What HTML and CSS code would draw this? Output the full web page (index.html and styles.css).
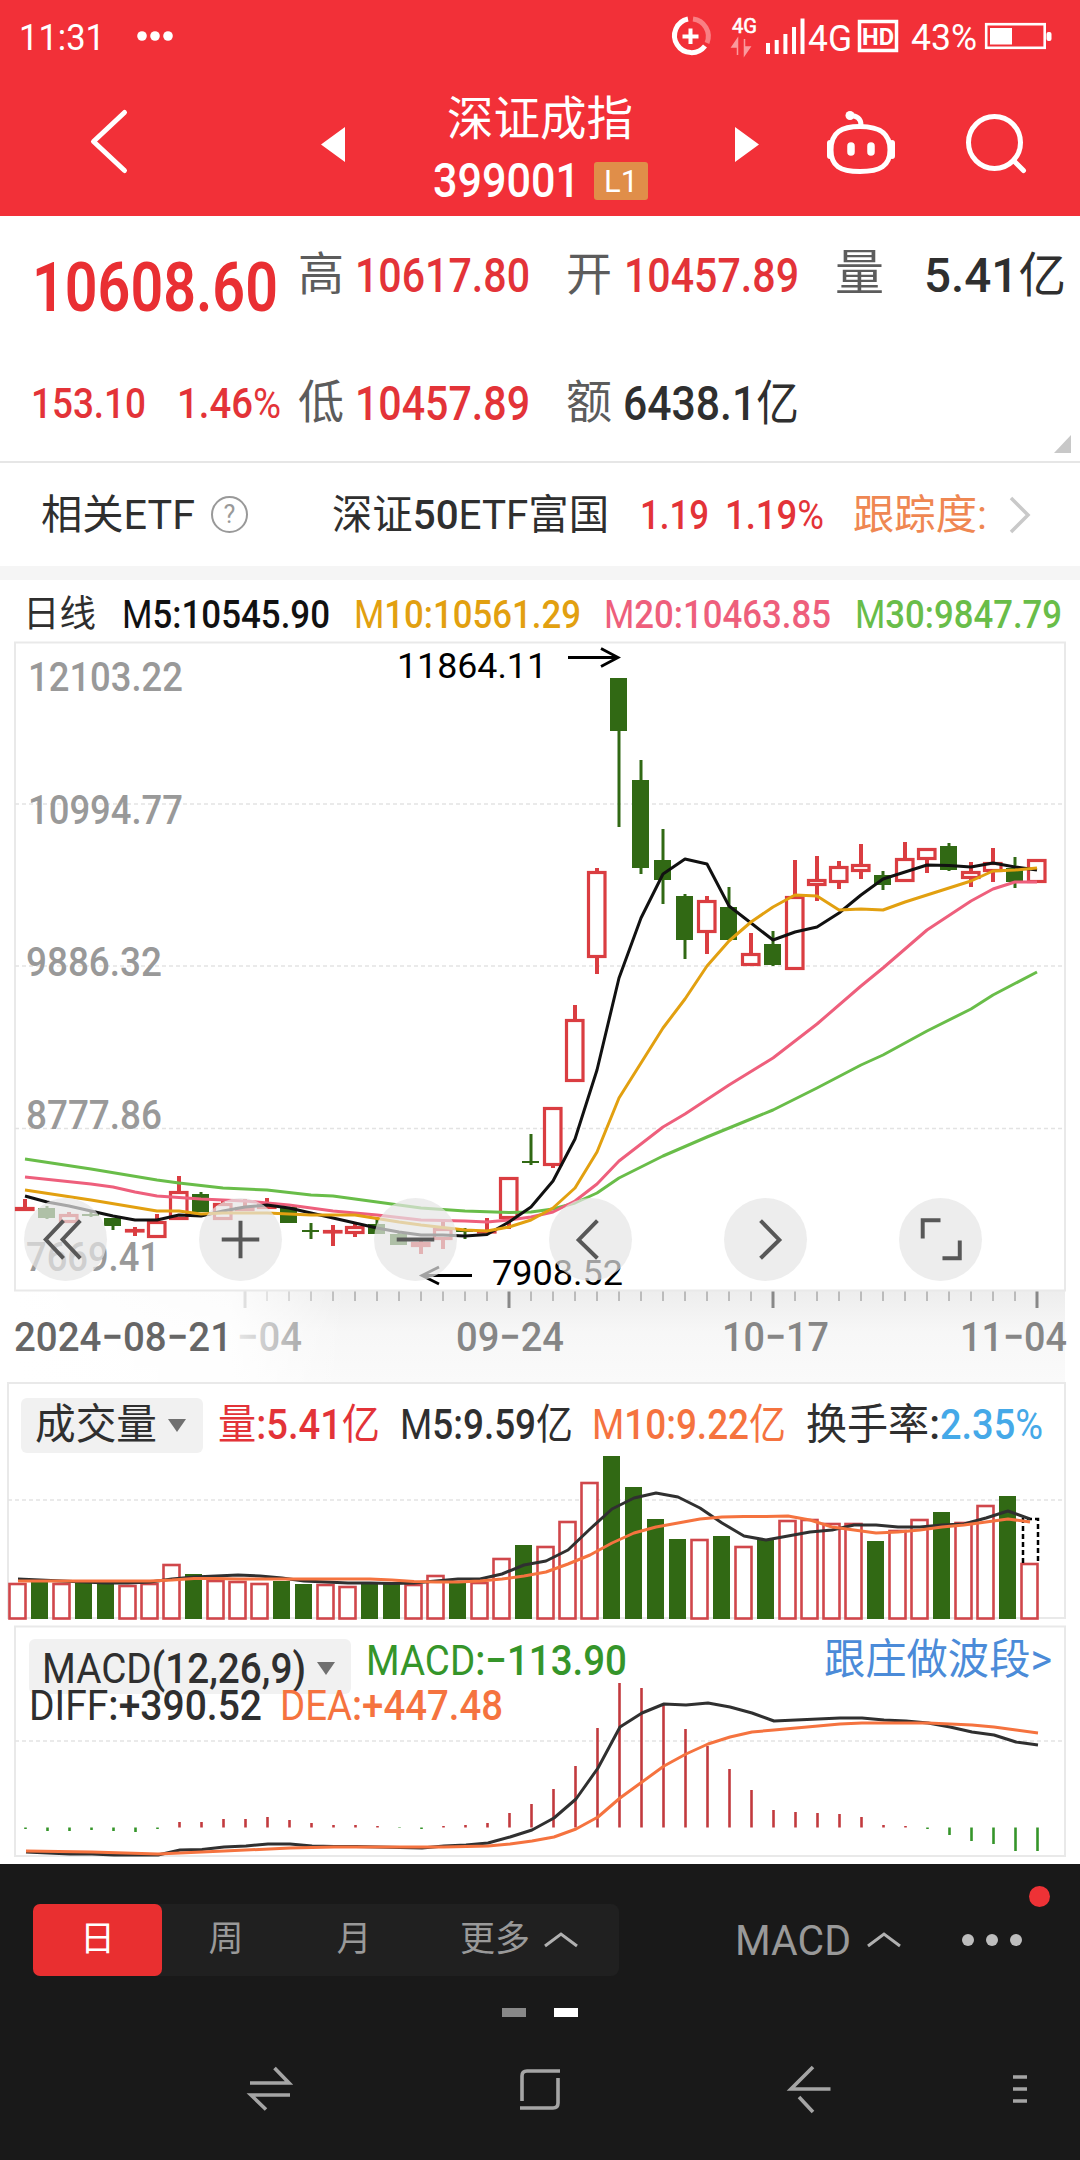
FILE: index.html
```html
<!DOCTYPE html>
<html lang="zh-CN">
<head>
  <meta charset="UTF-8">
  <meta name="viewport" content="width=device-width, initial-scale=1.0">
  <title>深证成指 399001</title>
  <link rel="stylesheet" href="styles.css">
</head>
<body>
  <header class="header">
    <div class="status">
      <span class="clock" data-w="86">11:31</span>
      <svg class="status-dots" width="40" height="14" viewBox="0 0 40 14"><circle cx="7" cy="7" r="4.8"/><circle cx="20" cy="7" r="4.8"/><circle cx="33" cy="7" r="4.8"/></svg>
      <svg class="status-icons" width="240" height="72" viewBox="670 0 240 72">
        <path d="M689 19 A17 17 0 1 0 706 46" fill="none" stroke="#fff" stroke-width="5"/>
        <path d="M694 19 A17.5 17.5 0 0 1 708 43" fill="none" stroke="#f97f83" stroke-width="5"/>
        <path d="M691.5 28.500v15.500M683.500 36.500h16" stroke="#fff" stroke-width="4"/>
        <text x="733" y="32.500" font-size="20" textLength="25" lengthAdjust="spacingAndGlyphs" stroke="#fff" stroke-width=".6">4G</text>
        <path d="M738.500 55V39L733 47h5M745.500 39v16l5.500-8h-5" fill="#fa9a9d" stroke="#fa9a9d" stroke-width="1.500"/>
        <path d="M769 43v11M777.700 40v14M786.400 34v20M795 27v27M803.500 18.500v35.500" stroke="#fff" stroke-width="4"/>
        <text x="809" y="51" font-size="37" textLength="44" lengthAdjust="spacingAndGlyphs">4G</text>
        <rect x="860.500" y="21.500" width="37" height="29" fill="none" stroke="#fff" stroke-width="3.500"/>
        <text x="863" y="44.500" font-size="24" font-weight="700" textLength="32" lengthAdjust="spacingAndGlyphs">HD</text>
      </svg>
      <span class="battery-text" data-w="66">43%</span>
      <svg class="battery" width="70" height="30" viewBox="0 0 70 30"><rect x="2.200" y="3.200" width="58.500" height="23.600" fill="none" stroke="#fff" stroke-width="2.600"/><rect x="6" y="7" width="22" height="16.500"/><rect x="62.500" y="11" width="5" height="9" rx="2"/></svg>
    </div>
    <div class="navbar">
      <svg width="1080" height="144" viewBox="0 72 1080 144" class="nav-icons">
        <path d="M124.500 112.500L93.500 141.500L124.500 170.500" class="line" stroke-width="5"/>
        <path d="M345 127v35l-24-17.500zM735 127v35l24-17.500z" fill="#fff"/>
        <g class="line" stroke-width="5">
          <path d="M860 126.500C878 126.500 890 132 890 150C890 166 880 171.500 860 171.500S831 166 831 150C831 132 842 126.500 860 126.500Z"/>
          <path d="M861 125C861 119 857 115.500 850 115.500"/>
          <path d="M830 143v13M892 143v13" stroke-width="6"/>
          <path d="M851 146v6M871 146v6" stroke-width="7.500"/>
          <circle cx="994.500" cy="142.500" r="26"/>
          <path d="M1014 161L1023.500 170.500"/>
        </g>
        <circle cx="850" cy="115.500" r="4.500" fill="#fff"/>
      </svg>
      <div class="title">
        <div class="title-name">深证成指</div>
        <div class="title-code"><span class="num code" data-w="147">399001</span><span class="level">L1</span></div>
      </div>
    </div>
  </header>

  <section class="quote">
    <div class="quote-row first">
      <span class="num price" data-w="246">10608.60</span>
      <span class="label">高</span><span class="num red" data-w="175">10617.80</span>
      <span class="label">开</span><span class="num red" data-w="175">10457.89</span>
      <span class="label">量</span><span class="num" data-w="142">5.41<em>亿</em></span>
    </div>
    <div class="quote-row second">
      <span class="num change" data-w="115">153.10</span><span class="num change" data-w="104">1.46<em>%</em></span>
      <span class="label">低</span><span class="num red" data-w="175">10457.89</span>
      <span class="label">额</span><span class="num" data-w="176">6438.1<em>亿</em></span>
    </div>
    <i class="corner"></i>
  </section>

  <section class="etf">
    <span class="etf-title" data-w="154">相关ETF</span>
    <span class="help">?</span>
    <span class="etf-name" data-w="277">深证<b>50</b>ETF富国</span>
    <span class="num red etf-a" data-w="69">1.19</span>
    <span class="num red etf-b" data-w="99">1.19<em>%</em></span>
    <span class="track" data-w="134">跟踪度:</span>
    <svg width="24" height="40" viewBox="0 0 24 40"><path d="M3 3L20 20L3 37" fill="none" stroke="#c9c9c9" stroke-width="3.500"/></svg>
  </section>

  <section class="legend">
    <span class="day" data-w="73">日线</span>
    <span class="num m5" data-w="208"><em>M</em>5:10545.90</span>
    <span class="num m10" data-w="227"><em>M</em>10:10561.29</span>
    <span class="num m20" data-w="227"><em>M</em>20:10463.85</span>
    <span class="num m30" data-w="207"><em>M</em>30:9847.79</span>
  </section>

  <section class="stack kline">
    <svg id="kline" width="1080" height="741" viewBox="0 641 1080 741">
      <defs>
        <linearGradient id="shade" x1="0" y1="0" x2="0" y2="1"><stop offset="0" stop-color="#ededed"/><stop offset=".45" stop-color="#f7f7f7"/><stop offset="1" stop-color="#fafafa"/></linearGradient>
        <linearGradient id="fade" x1="0" y1="0" x2="1" y2="0"><stop offset="0" stop-color="#fff"/><stop offset=".65" stop-color="#fff" stop-opacity=".85"/><stop offset="1" stop-color="#fff" stop-opacity="0"/></linearGradient>
      </defs>
      <rect x="15" y="1291" width="1050" height="91" fill="url(#shade)"/>
      <g id="ticks"></g>
      <g class="axis-text date">
        <text x="237" y="1351" textLength="65">−04</text>
        <text x="456" y="1351" textLength="108">09−24</text>
        <text x="722" y="1351" textLength="107">10−17</text>
        <text x="960" y="1351" textLength="107">11−04</text>
        <rect x="15" y="1291" width="330" height="91" fill="url(#fade)"/>
        <text x="14" y="1351" textLength="218" fill="#666">2024−08−21</text>
      </g>
      <rect x="15" y="642.500" width="1050" height="648" class="frame"/>
      <path d="M15 804H1065M15 966H1065M15 1128.500H1065" class="grid"/>
      <g class="axis-text price-axis">
        <text x="28" y="691" textLength="155">12103.22</text>
        <text x="28" y="824" textLength="155">10994.77</text>
        <text x="26" y="976" textLength="136">9886.32</text>
        <text x="26" y="1129" textLength="136">8777.86</text>
        <text x="26" y="1271" textLength="134">7669.41</text>
      </g>
      <g id="candles"></g>
      <g id="averages"></g>
      <g class="mark">
        <text x="397" y="678" textLength="150">11864.11</text>
        <path d="M568 657.500H617M601 648.500L618 657.500L601 666.500"/>
        <text x="492" y="1284.500" textLength="131">7908.52</text>
        <path d="M472 1275.500H423M439 1267L422 1275.500L439 1284"/>
      </g>
    </svg>
    <div class="tools">
      <button><svg viewBox="0 0 84 84"><path d="M40 23L22 42L40 61M57 23L39 42L57 61"/></svg></button>
      <button><svg viewBox="0 0 84 84"><path d="M42 23V61M23 42H61"/></svg></button>
      <button><svg viewBox="0 0 84 84"><path d="M23 42H61"/></svg></button>
      <button><svg viewBox="0 0 84 84"><path d="M49 23L30 42.500L49 61"/></svg></button>
      <button><svg viewBox="0 0 84 84"><path d="M37 23L56 42.500L37 61"/></svg></button>
      <button><svg viewBox="0 0 84 84"><path d="M42 22.500H24V41M44 61H61.500V43"/></svg></button>
    </div>
  </section>

  <section class="stack volume">
    <svg id="volume" width="1080" height="240" viewBox="0 1381 1080 240">
      <rect x="8" y="1382" width="1057" height="235" class="frame"/>
      <path d="M8 1499H1065" class="grid"/>
    </svg>
    <div class="panel-head">
      <span class="picker"><span data-w="122">成交量</span><i></i></span>
      <span class="num red v1" data-w="162"><em>量</em>:5.41<em>亿</em></span>
      <span class="num v2" data-w="173"><em>M</em>5:9.59<em>亿</em></span>
      <span class="num orange v3" data-w="194"><em>M</em>10:9.22<em>亿</em></span>
      <span class="v4" data-w="134">换手率<b>:</b></span><span class="num blue" data-w="103">2.35<em>%</em></span>
    </div>
  </section>

  <section class="stack macd">
    <svg id="macd" width="1080" height="242" viewBox="0 1621 1080 242">
      <rect x="15" y="1625.500" width="1050" height="229.500" class="frame"/>
      <path d="M15 1740H1065" class="grid"/>
    </svg>
    <div class="macd-head">
      <div class="macd-row">
        <span class="picker"><span class="num" data-w="264"><em>MACD</em>(12,26,9)</span><i></i></span>
        <span class="num green" data-w="261"><em>MACD</em>:−113.90</span>
        <a class="link" data-w="228">跟庄做波段&gt;</a>
      </div>
      <div class="macd-row values">
        <span class="num" data-w="233"><em>DIFF</em>:+390.52</span>
        <span class="num orange" data-w="223"><em>DEA</em>:+447.48</span>
      </div>
    </div>
  </section>

  <footer class="footer">
    <div class="toolbar">
      <div class="tabs">
        <span class="tab active">日</span><span class="tab">周</span><span class="tab">月</span>
        <span class="tab more">更多<svg width="36" height="18" viewBox="0 0 36 18"><path d="M2 15L18 3L34 15"/></svg></span>
      </div>
      <div class="indicator"><span data-w="116">MACD</span><svg width="36" height="18" viewBox="0 0 36 18"><path d="M2 15L18 3L34 15"/></svg></div>
      <div class="dots"><i></i><i></i><i></i><b class="badge"></b></div>
    </div>
    <div class="pager"><i></i><i class="on"></i></div>
    <svg class="sysnav" width="1080" height="100" viewBox="0 2038 1080 100">
      <path d="M250 2082H289L274.500 2067M290 2094H251L266 2108.500"/>
      <path d="M522 2100V2075Q522 2070 527 2070H560M520 2107H553Q558 2107 558 2102V2077"/>
      <path d="M813 2066L791 2088H830.500M799 2096L813 2111"/>
      <path d="M1013 2076h14M1013 2088h14M1013 2100h14"/>
    </svg>
  </footer>

  <script src="script.js"></script>
</body>
</html>
```

FILE: styles.css
```css
* {
  box-sizing: border-box;
}
body {
  margin: 0;
  width: 1080px;
  height: 2160px;
  overflow: hidden;
  background: #fff;
  color: #2f2f2f;
  font-family: Roboto, "Noto Sans CJK SC", sans-serif;
}
svg {
  display: block;
  flex: none;
}
span {
  white-space: nowrap;
}
i {
  display: block;
}
em {
  font-style: normal;
  font-weight: 400;
}
b {
  font-weight: 500;
}
[data-w] {
  display: inline-block;
  flex: none;
  transform-origin: 0 50%;
}
.num {
  font-weight: 500;
}
.red {
  color: #e33338;
}
.orange {
  color: #f5733f;
}
.blue {
  color: #45a9e8;
}
.green {
  color: #35952a;
}

/* header */
.header {
  height: 216px;
  background: #f23038;
  color: #fff;
}
.status {
  display: flex;
  align-items: center;
  height: 72px;
  padding: 3px 0 0 19px;
}
.status svg {
  fill: #fff;
}
.clock,
.battery-text {
  font-size: 37px;
}
.status-dots {
  margin-left: 30px;
  margin-top: -3px;
}
.status-icons {
  margin: -3px 2px 0 494px;
}
.battery {
  margin-left: 7px;
  margin-top: -3px;
}
.navbar {
  display: grid;
  height: 144px;
}
.nav-icons,
.title {
  grid-area: 1 / 1;
}
.line {
  fill: none;
  stroke: #fff;
  stroke-linecap: round;
  stroke-linejoin: round;
}
.title {
  padding-left: 433px;
}
.title-name {
  padding: 19px 0 0 14px;
  font-size: 46.500px;
  line-height: 56px;
}
.title-code {
  display: flex;
  align-items: center;
  height: 72px;
  margin-top: -2px;
}
.code {
  font-size: 49px;
  line-height: 60px;
}
.level {
  width: 54px;
  height: 38px;
  margin-left: 14px;
  background: #e08e49;
  border-radius: 3px;
  font-size: 31px;
  line-height: 39px;
  text-align: center;
}

/* quote */
.quote {
  position: relative;
  height: 247px;
  padding-top: 30px;
  border-bottom: 2px solid #e6e6e6;
}
.quote-row {
  display: flex;
  align-items: center;
  height: 60px;
  font-size: 48px;
  line-height: 60px;
}
.second {
  margin-top: 68px;
}
.price {
  margin-left: 32px;
  font-size: 69px;
  padding-top: 24px;
  font-weight: 600;
  color: #e92f33;
}
.quote .label {
  flex: none;
  width: 46px;
  margin: -4px 11px 0 20px;
  font-size: 46px;
  color: #5c5c5c;
}
.quote .red + .label {
  margin-left: 36px;
}
.first .red + .label:nth-of-type(4) {
  margin-right: 12px;
}
.first .red + .label:nth-of-type(6) {
  width: 50px;
  margin-right: 39px;
  font-size: 49px;
}
.change {
  margin-left: 31px;
  color: #e33338;
  font-size: 42px;
}
.second .label:nth-of-type(3) {
  margin-left: 17px;
}
.corner {
  position: absolute;
  right: 9px;
  bottom: 8px;
  border: solid transparent;
  border-width: 0 0 18px 17px;
  border-bottom-color: #c8c8c8;
}

/* etf */
.etf {
  display: flex;
  align-items: center;
  height: 103px;
  padding-left: 41px;
  font-size: 41px;
  line-height: 60px;
}
.help {
  width: 37px;
  height: 37px;
  margin: 0 84px 0 16px;
  border: 2px solid #999;
  border-radius: 50%;
  color: #999;
  font-size: 25px;
  line-height: 34px;
  text-align: center;
}
.etf-a {
  margin-left: 31px;
}
.etf-b {
  margin-left: 16px;
}
.track {
  margin-left: 29px;
  color: #ef8752;
}
.etf svg {
  margin-left: 21px;
}

/* legend */
.legend {
  display: flex;
  align-items: center;
  height: 75px;
  padding: 8px 0 0 23px;
  border-top: 14px solid #f5f5f5;
  font-size: 39px;
  line-height: 50px;
}
.day {
  font-size: 37px;
}
.m5 {
  margin-left: 26px;
  color: #111;
}
.m10 {
  margin-left: 24px;
  color: #e2a010;
}
.m20 {
  margin-left: 23px;
  color: #ee5f7c;
}
.m30 {
  margin-left: 24px;
  color: #69bd49;
}

/* charts */
.stack {
  display: grid;
}
.stack > * {
  grid-area: 1 / 1;
}
.frame {
  fill: none;
  stroke: #e9e9e9;
  stroke-width: 2;
}
.grid {
  stroke: #e3e3e3;
  stroke-width: 1.500;
  stroke-dasharray: 4 3;
}
.axis-text {
  font-size: 41px;
  font-weight: 500;
  fill: #999;
}
.date {
  fill: #868686;
}
.mark text {
  font-size: 35.500px;
  fill: #000;
}
.mark path {
  fill: none;
  stroke: #000;
  stroke-width: 2.800;
}
.ma {
  fill: none;
  stroke-width: 3;
  stroke-linejoin: round;
}
.tools {
  display: flex;
  gap: 92px;
  padding: 557px 0 0 24px;
  height: 641px;
}
.tools button {
  width: 83px;
  height: 83px;
  padding: 0;
  border: none;
  border-radius: 50%;
  background: rgba(229, 229, 229, .7);
}
.tools path {
  fill: none;
  stroke: #585858;
  stroke-width: 4;
}
.panel-head {
  display: flex;
  align-items: center;
  height: 86px;
  padding-left: 21px;
  font-size: 42px;
  line-height: 54px;
}
.picker {
  display: flex;
  align-items: center;
  width: 182px;
  height: 55px;
  padding-left: 14px;
  background: #f1f1f1;
  border-radius: 6px;
}
.picker i {
  margin-left: 11px;
  border: solid transparent;
  border-width: 13px 9.500px 0;
  border-top-color: #707070;
}
.v1 {
  margin-left: 15px;
}
.v2 {
  margin-left: 20px;
}
.v3 {
  margin-left: 19px;
}
.v4 {
  margin-left: 20px;
}
.macd-head {
  padding: 17px 0 0 29px;
  font-size: 42px;
}
.macd-row {
  display: flex;
  line-height: 46px;
}
.macd .picker {
  width: 322px;
  padding: 4px 0 0 13px;
}
.macd .green {
  margin-left: 15px;
  margin-top: -1px;
}
.link {
  margin: -2px 0 0 197px;
  color: #4b8bd8;
}
.macd .values {
  margin-top: -11px;
  gap: 18px;
}

/* footer */
.footer {
  height: 297px;
  background: #191919;
  border-bottom: 1px solid #000;
}
.toolbar {
  display: flex;
  padding: 40px 0 0 33px;
  height: 112px;
  color: #999;
}
.toolbar path {
  fill: none;
  stroke: #b0b0b0;
  stroke-width: 3;
}
.tabs {
  display: flex;
  width: 586px;
  height: 72px;
  background: #202020;
  border-radius: 8px;
  font-size: 35px;
  line-height: 72px;
}
.tab {
  width: 128px;
  text-align: center;
}
.active {
  width: 129px;
  background: #e92f30;
  border-radius: 7px;
  color: #fff;
}
.more {
  display: flex;
  align-items: center;
  width: 200px;
  padding-left: 42px;
  gap: 13px;
}
.indicator {
  display: flex;
  align-items: center;
  height: 72px;
  margin-left: 116px;
  gap: 15px;
  font-size: 42px;
}
.dots {
  position: relative;
  display: flex;
  align-items: center;
  height: 72px;
  margin-left: 60px;
  gap: 12px;
}
.dots i {
  width: 12px;
  height: 12px;
  border-radius: 50%;
  background: #bdbdbd;
}
.badge {
  position: absolute;
  left: 67px;
  top: -18px;
  width: 21px;
  height: 21px;
  border-radius: 50%;
  background: #ee3236;
}
.pager {
  display: flex;
  justify-content: center;
  gap: 28px;
  height: 63px;
  padding-top: 32px;
}
.pager i {
  width: 24px;
  height: 9px;
  background: #888;
}
.pager .on {
  background: #fff;
}
.sysnav path {
  fill: none;
  stroke: #a5a5a5;
  stroke-width: 3.600;
}
```

FILE: script.js
```javascript
const RED = '#da3d41';
const GREEN = '#316914';
const STEP = 22;

// [up/down, body top, body bottom, high, low]
const candles = [
  ['r',1207,1211,1199,1211],['g',1208,1218,1206,1219],['r',1214,1223,1212,1223],['g',1214,1216,1211,1217],
  ['g',1218,1226,1218,1230],['r',1229,1232,1227,1236],['r',1221,1238,1214,1238],['r',1191,1220,1176,1220],
  ['g',1194,1212,1192,1212],['r',1203,1220,1201,1220],['r',1207,1211,1199,1211],['r',1203,1209,1198,1209],
  ['g',1207,1223,1207,1223],['g',1230,1232,1223,1239],['r',1230,1233,1225,1246],['r',1226,1234,1224,1237],
  ['g',1224,1234,1217,1234],['g',1234,1245,1231,1245],['r',1242,1247,1240,1254],['r',1228,1240,1220,1249],
  ['g',1230,1232,1228,1239],['r',1230,1233,1218,1233],['r',1177,1219,1177,1229],['g',1161,1163,1134,1165],
  ['r',1107,1166,1107,1168],['r',1019,1082,1005,1082],['r',871,958,868,974],['g',678,731,678,827],
  ['g',780,868,760,874],['g',860,880,829,904],['g',896,940,894,959],['r',900,933,896,954],
  ['g',907,940,887,940],['r',953,966,933,966],['g',944,965,931,966],['r',896,970,860,970],
  ['r',879,886,856,901],['r',866,883,861,889],['r',864,872,844,879],['g',875,885,871,890],
  ['r',858,882,842,882],['r',848,860,848,873],['g',846,870,843,871],['r',871,879,862,887],
  ['r',862,872,848,882],['g',868,882,857,888],['r',859,883,859,883]
];

// [bar index, y]
const averages = {
  '#69bd49': [[0,1159],[3,1169],[6,1180],[7,1183],[9,1188],[11,1190],[13,1195],[14,1196],[16,1202],[18,1208],[20,1211],[22,1212.5],[23,1212],[24,1209],[25,1203],[26,1193],[27,1178],[29,1156],[31,1137],[33,1119],[34,1110],[36,1088],[38,1065],[39,1055],[41,1031],[43,1009],[44,995],[46,972]],
  '#ee5f7c': [[0,1177],[3,1184],[4,1187],[5,1192],[6,1196],[8,1199],[10,1201],[12,1205],[14,1211],[16,1215],[18,1220],[20,1221],[21,1222],[22,1220],[23,1217],[24,1212],[25,1201],[26,1184],[27,1161],[29,1127],[30,1114],[32,1085],[34,1058],[36,1024],[38,986],[39,968],[41,930],[43,901],[44,889],[45,882],[46,882]],
  '#111': [[0,1196],[1,1202],[2,1206],[3,1211],[4,1216],[5,1220],[6,1220],[7,1215],[8,1216],[9,1211],[10,1207],[11,1205],[12,1208],[13,1213],[14,1218],[15,1223],[16,1228],[17,1232],[18,1235],[19,1235],[20,1236],[21,1234.5],[22,1222],[23,1207],[24,1181],[25,1139],[26,1070],[27,978],[28,918],[29,874],[30,859],[31,864],[32,906],[33,923],[34,940],[35,932],[36,927],[37,913],[38,895],[39,879],[40,872],[41,865],[42,865.5],[43,867],[44,863],[45,867],[46,870]],
  '#e2a010': [[0,1190],[3,1200],[6,1211],[7,1211],[8,1214],[9,1213],[11,1213],[13,1215],[15,1215],[17,1222],[18,1225],[20,1230],[21,1231],[22,1227],[23,1220],[24,1208],[25,1188],[26,1152],[27,1098],[28,1063],[29,1028],[30,999],[31,966],[32,941],[33,922],[34,907],[35,895],[36,896],[37,910],[38,909],[39,910],[40,902],[41,895],[42,888],[43,881],[44,871],[45,870],[46,868]]
};

const volTops = [1582,1581,1582,1582,1583,1584,1582,1563,1573,1579,1580,1582,1580,1583,1583,1585,1583,1583,1583,1574,1582,1581,1557,1544,1545,1520,1481,1455,1486,1518,1538,1538,1535,1545,1538,1519,1518,1522,1522,1540,1529,1518,1511,1521,1504,1495,1562];
const volDown = [1,3,4,8,12,13,16,17,20,23,27,28,29,30,32,34,39,42,45];
const volM5 = [1578,1579,1580,1581,1582,1582,1581,1578,1576,1575,1574,1575,1577,1580,1581,1582,1582,1582.5,1582,1580,1578,1578,1573,1564,1560,1549,1528,1508,1497,1492,1496,1507,1522,1535,1539,1535,1531,1529,1524,1524,1526,1526,1524,1523,1517,1510,1518];
const volM10 = [1580,1580,1580,1580,1580,1580,1580,1579,1577.5,1577.5,1578,1578,1578,1578,1578,1578,1578,1579,1580.5,1581,1581,1580,1578,1575,1571,1563,1554,1542,1532,1526,1522,1518,1516,1515.5,1515.5,1515,1519,1526,1529,1532,1531,1529,1526,1524,1521,1518,1521];

const macdEnds = [1828,1830,1830,1829,1830,1831,1828,1821,1821,1818,1818,1816,1819,1822,1824,1824,1825,1827,1828,1825,1824,1822,1812,1803,1788,1765,1727,1682,1687,1703,1728,1745,1768,1789,1809,1811,1812,1813,1816,1824,1825,1828,1834,1840,1843,1850,1850];
const diff = [1851,1852,1853,1853,1854,1854,1854,1849,1848.5,1846,1845,1843,1843,1845,1845.5,1845.5,1846,1846.5,1847,1845,1844,1842,1836,1829,1817,1798,1767,1726,1712,1703,1704,1702,1706,1712,1720,1719,1718,1717,1717,1719,1720,1722,1726,1731,1734,1741,1744];
const dea = [[0,1850],[3,1851],[6,1853],[9,1850],[12,1847],[14,1846],[19,1846],[21,1845],[22,1843],[23,1840],[24,1836],[25,1828],[26,1816],[27,1797],[28,1781],[29,1765],[30,1753],[31,1743],[32,1736],[33,1731],[34,1729],[35,1727],[36,1725],[37,1723],[38,1722],[41,1722],[43,1724],[44,1726],[45,1729],[46,1732]];

function line(points, color, x0) {
  const pts = points.map((p, i) => Array.isArray(p) ? `${x0 + p[0] * STEP},${p[1]}` : `${x0 + i * STEP},${p}`);
  return `<polyline class="ma" stroke="${color}" points="${pts.join(' ')}"/>`;
}

// K线
let html = '';
candles.forEach(([type, top, bottom, high, low], i) => {
  const x = 25 + i * STEP;
  if (type === 'g') {
    html += `<path d="M${x} ${high}V${low}" stroke="${GREEN}" stroke-width="3"/>`;
    html += `<rect x="${x - 9}" y="${top}" width="17" height="${bottom - top}" fill="${GREEN}"/>`;
  } else {
    html += `<path d="M${x} ${high}V${top + 1}M${x} ${bottom - 1}V${low}" stroke="${RED}" stroke-width="4"/>`;
    html += `<rect x="${x - 8.5}" y="${top + 1.5}" width="16.500" height="${Math.max(bottom - top - 3, 0.5)}" fill="#fff" stroke="${RED}" stroke-width="3.2"/>`;
  }
});
document.getElementById('candles').innerHTML = html;
document.getElementById('averages').innerHTML =
  Object.entries(averages).map(([color, points]) => line(points, color, 25)).join('');

// 日期刻度
html = '';
for (let i = 10; i < 47; i++) {
  const major = (i - 10) % 12 === 0;
  html += `<path d="M${25 + i * STEP} 1291v${major ? 17 : 10}" stroke="#888" stroke-width="${major ? 3 : 1}"/>`;
}
document.getElementById('ticks').innerHTML = html;

// 成交量
html = '';
volTops.forEach((top, i) => {
  const x = 17.5 + i * STEP;
  html += volDown.includes(i)
    ? `<rect x="${x - 8.5}" y="${top}" width="17" height="${1618 - top}" fill="${GREEN}"/>`
    : `<rect x="${x - 8}" y="${top + 1}" width="16" height="${1616.5 - top}" fill="#fff" stroke="#d0474b" stroke-width="2.6"/>`;
});
html += '<path d="M1023 1562V1518H1038V1562" fill="none" stroke="#000" stroke-width="2.5" stroke-dasharray="5 3"/>';
html += line(volM5, '#303030', 18) + line(volM10, '#f5733f', 18);
document.getElementById('volume').innerHTML += html;

// MACD
html = '';
macdEnds.forEach((end, i) => {
  html += `<path d="M${25.5 + i * STEP} 1826.5V${end}" stroke="${end > 1826.5 ? '#35952a' : '#c23a3e'}" stroke-width="2.6"/>`;
});
html += line(diff, '#303030', 26) + line(dea, '#f5733f', 26);
document.getElementById('macd').innerHTML += html;

// 数字压缩到固定宽度
document.querySelectorAll('[data-w]').forEach(el => {
  const width = Number(el.dataset.w);
  const natural = el.getBoundingClientRect().width;
  el.style.transform = `scaleX(${width / natural})`;
  el.style.marginRight = `${width - natural}px`;
});
document.querySelectorAll('.axis-text text, .mark text').forEach(el => {
  el.setAttribute('lengthAdjust', 'spacingAndGlyphs');
});
```
